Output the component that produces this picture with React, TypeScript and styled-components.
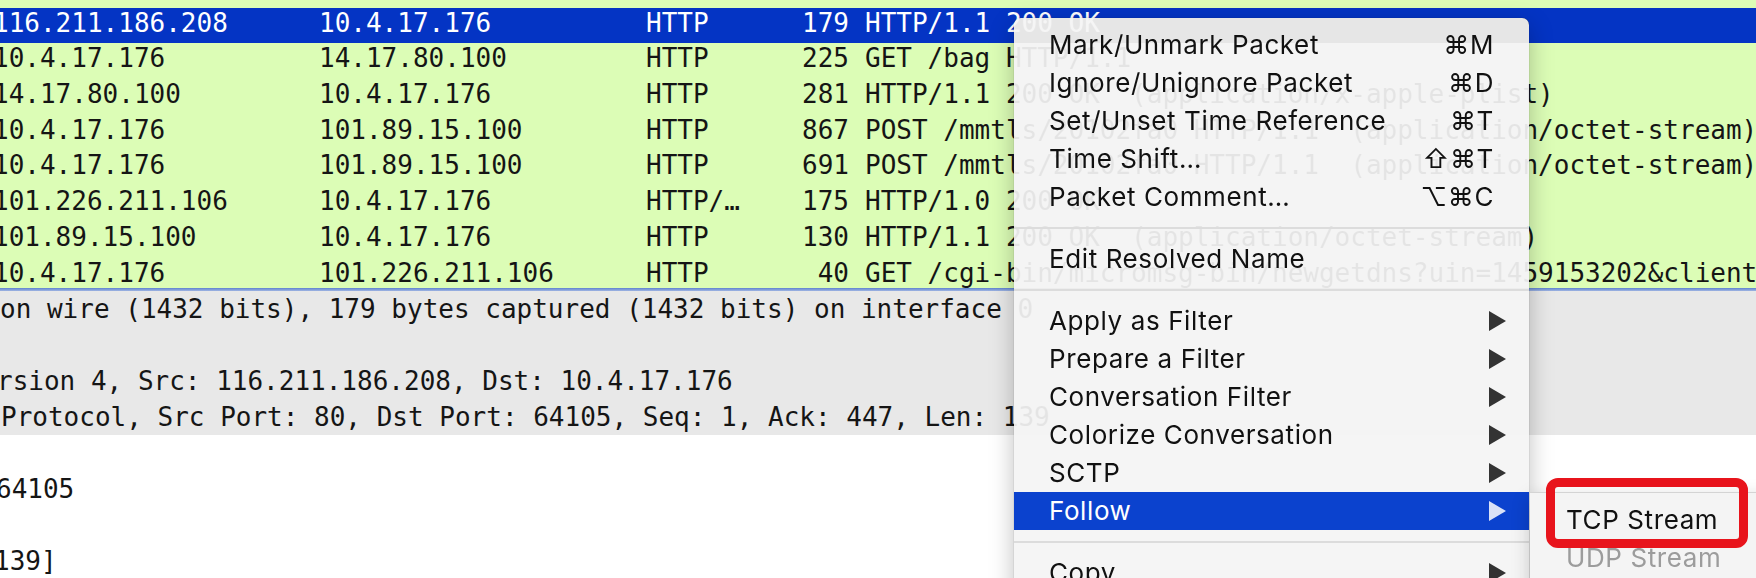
import React from "react";
import styled, { createGlobalStyle } from "styled-components";

const MONO = `"DejaVu Sans Mono", "Liberation Mono", monospace`;
const UI = `Inter, "DejaVu Sans", sans-serif`;

const GlobalStyle = createGlobalStyle`
  html, body {
    margin: 0;
    padding: 0;
  }
  body {
    width: 1756px;
    height: 578px;
    overflow: hidden;
    background: #ffffff;
  }
`;

type Packet = {
  src: string;
  dst: string;
  proto: string;
  len: string;
  info: string;
};

const packets: Packet[] = [
  { src: "116.211.186.208", dst: "10.4.17.176", proto: "HTTP", len: "305", info: "Continuation" },
  { src: "116.211.186.208", dst: "10.4.17.176", proto: "HTTP", len: "179", info: "HTTP/1.1 200 OK" },
  { src: "10.4.17.176", dst: "14.17.80.100", proto: "HTTP", len: "225", info: "GET /bag HTTP/1.1" },
  { src: "14.17.80.100", dst: "10.4.17.176", proto: "HTTP", len: "281", info: "HTTP/1.1 200 OK  (application/x-apple-plist)" },
  { src: "10.4.17.176", dst: "101.89.15.100", proto: "HTTP", len: "867", info: "POST /mmtls/20102fa0 HTTP/1.1  (application/octet-stream)" },
  { src: "10.4.17.176", dst: "101.89.15.100", proto: "HTTP", len: "691", info: "POST /mmtls/20102fa0 HTTP/1.1  (application/octet-stream)" },
  { src: "101.226.211.106", dst: "10.4.17.176", proto: "HTTP/…", len: "175", info: "HTTP/1.0 200 OK" },
  { src: "101.89.15.100", dst: "10.4.17.176", proto: "HTTP", len: "130", info: "HTTP/1.1 200 OK  (application/octet-stream)" },
  { src: "10.4.17.176", dst: "101.226.211.106", proto: "HTTP", len: "40", info: "GET /cgi-bin/micromsg-bin/newgetdns?uin=1459153202&clientversion=1661534743 HTTP/1.1" },
];

const details = [
  { text: "on wire (1432 bits), 179 bytes captured (1432 bits) on interface 0", shift: 0, shaded: true },
  { text: "", shift: 0, shaded: true },
  { text: "rsion 4, Src: 116.211.186.208, Dst: 10.4.17.176", shift: -3, shaded: true },
  { text: "Protocol, Src Port: 80, Dst Port: 64105, Seq: 1, Ack: 447, Len: 139", shift: 1, shaded: true },
  { text: "", shift: 0, shaded: false },
  { text: "64105", shift: -4, shaded: false },
  { text: "", shift: 0, shaded: false },
  { text: "139]", shift: -6, shaded: false },
];

type Entry =
  | { kind: "item"; label: string; shortcut?: string; sub?: boolean; active?: boolean }
  | { kind: "sep" };

const menu: Entry[] = [
  { kind: "item", label: "Mark/Unmark Packet", shortcut: "⌘M" },
  { kind: "item", label: "Ignore/Unignore Packet", shortcut: "⌘D" },
  { kind: "item", label: "Set/Unset Time Reference", shortcut: "⌘T" },
  { kind: "item", label: "Time Shift…", shortcut: "⇧⌘T" },
  { kind: "item", label: "Packet Comment…", shortcut: "⌥⌘C" },
  { kind: "sep" },
  { kind: "item", label: "Edit Resolved Name" },
  { kind: "sep" },
  { kind: "item", label: "Apply as Filter", sub: true },
  { kind: "item", label: "Prepare a Filter", sub: true },
  { kind: "item", label: "Conversation Filter", sub: true },
  { kind: "item", label: "Colorize Conversation", sub: true },
  { kind: "item", label: "SCTP", sub: true },
  { kind: "item", label: "Follow", sub: true, active: true },
  { kind: "sep" },
  { kind: "item", label: "Copy", sub: true },
  { kind: "sep" },
  { kind: "item", label: "Protocol Preferences", sub: true },
  { kind: "item", label: "Decode As…" },
];

const Screen = styled.div`
  position: relative;
  width: 1756px;
  height: 578px;
  overflow: hidden;
  display: flex;
  flex-direction: column;
  font-family: ${MONO};
  font-size: 26px;
  color: #151515;
`;

const PacketList = styled.div`
  flex-shrink: 0;
  height: 288px;
  overflow: hidden;
  background: #dcfdb6;
`;

const Row = styled.div<{ $selected?: boolean; $clipTop?: boolean }>`
  display: grid;
  grid-template-columns: 319px 327px 140px 63px 1fr;
  height: 35.7px;
  line-height: 30px;
  white-space: pre;
  margin-top: ${(p) => (p.$clipTop ? "-28px" : "0")};
  background: ${(p) => (p.$selected ? "#0434c4" : "transparent")};
  color: ${(p) => (p.$selected ? "#ffffff" : "#151515")};
`;

const Cell = styled.span<{ $right?: boolean; $indent?: number; $pad?: number }>`
  overflow: hidden;
  text-align: ${(p) => (p.$right ? "right" : "left")};
  text-indent: ${(p) => p.$indent ?? 0}px;
  padding-left: ${(p) => p.$pad ?? 0}px;
`;

const Splitter = styled.div`
  flex-shrink: 0;
  height: 3px;
  background: linear-gradient(#5f83cf, #9fb5e2);
`;

const DetailPane = styled.div`
  flex: 1;
  background: #ffffff;
  overflow: hidden;
`;

const DetailLine = styled.div<{ $shaded?: boolean; $shift: number }>`
  height: 36px;
  line-height: 36px;
  white-space: pre;
  overflow: hidden;
  text-indent: ${(p) => p.$shift}px;
  background: ${(p) => (p.$shaded ? "#e8e8e8" : "#ffffff")};
`;

const Menu = styled.div`
  position: absolute;
  left: 1014px;
  top: 18px;
  width: 515px;
  padding: 8px 0;
  border-radius: 7px;
  background: rgba(244, 244, 244, 0.93);
  backdrop-filter: saturate(0);
  box-shadow: 0 0 0 1px rgba(0, 0, 0, 0.05), 0 8px 24px rgba(0, 0, 0, 0.26);
  font-family: ${UI};
  font-size: 26px;
  letter-spacing: 0.6px;
  color: #111111;
`;

const MenuItem = styled.div<{ $active?: boolean }>`
  position: relative;
  display: flex;
  align-items: center;
  justify-content: space-between;
  height: 38px;
  line-height: 38px;
  padding: 0 23px 0 35px;
  white-space: nowrap;
  background: ${(p) => (p.$active ? "#0b42ce" : "transparent")};
  color: ${(p) => (p.$active ? "#ffffff" : "#111111")};
`;

const Shortcut = styled.span`
  margin-right: 12px;
`;

const Arrow = styled.svg`
  display: block;
  width: 17px;
  height: 20px;
  fill: currentColor;
  opacity: 0.85;
`;

const Separator = styled.div`
  height: 2px;
  margin: 11px 0;
  background: #dcdcdc;
`;

const SubMenu = styled.div`
  position: absolute;
  left: 100%;
  top: 0;
  width: 260px;
  padding: 8px 0;
  margin-left: 1px;
  background: #f4f4f4;
  border-top: 1px solid #d4d4d4;
  box-shadow: 0 6px 18px rgba(0, 0, 0, 0.2);
  color: #111111;
`;

const SubItem = styled.div<{ $disabled?: boolean }>`
  height: 38px;
  line-height: 38px;
  padding-left: 36px;
  color: ${(p) => (p.$disabled ? "#9c9c9c" : "#111111")};
`;

const Callout = styled.div`
  position: absolute;
  left: 16px;
  top: -15px;
  width: 202px;
  height: 70px;
  box-sizing: border-box;
  border: 9px solid #e8141c;
  border-radius: 12px;
  pointer-events: none;
`;

const SubArrow = () => (
  <Arrow viewBox="0 0 17 20">
    <polygon points="0,0 17,10 0,20" />
  </Arrow>
);

export default function App() {
  return (
    <>
      <GlobalStyle />
      <Screen>
        <PacketList>
          {packets.map((p, i) => (
            <Row key={i} $clipTop={i === 0} $selected={i === 1}>
              <Cell $indent={-7}>{p.src}</Cell>
              <Cell>{p.dst}</Cell>
              <Cell>{p.proto}</Cell>
              <Cell $right>{p.len}</Cell>
              <Cell $pad={16}>{p.info}</Cell>
            </Row>
          ))}
        </PacketList>
        <Splitter />
        <DetailPane>
          {details.map((d, i) => (
            <DetailLine key={i} $shaded={d.shaded} $shift={d.shift}>
              {d.text}
            </DetailLine>
          ))}
        </DetailPane>

        <Menu>
          {menu.map((e, i) =>
            e.kind === "sep" ? (
              <Separator key={i} />
            ) : (
              <MenuItem key={i} $active={e.active}>
                <span>{e.label}</span>
                {e.shortcut && <Shortcut>{e.shortcut}</Shortcut>}
                {e.sub && <SubArrow />}
                {e.active && (
                  <SubMenu>
                    <SubItem>TCP Stream</SubItem>
                    <SubItem $disabled>UDP Stream</SubItem>
                    <SubItem $disabled>SSL Stream</SubItem>
                    <Callout />
                  </SubMenu>
                )}
              </MenuItem>
            )
          )}
        </Menu>
      </Screen>
    </>
  );
}
